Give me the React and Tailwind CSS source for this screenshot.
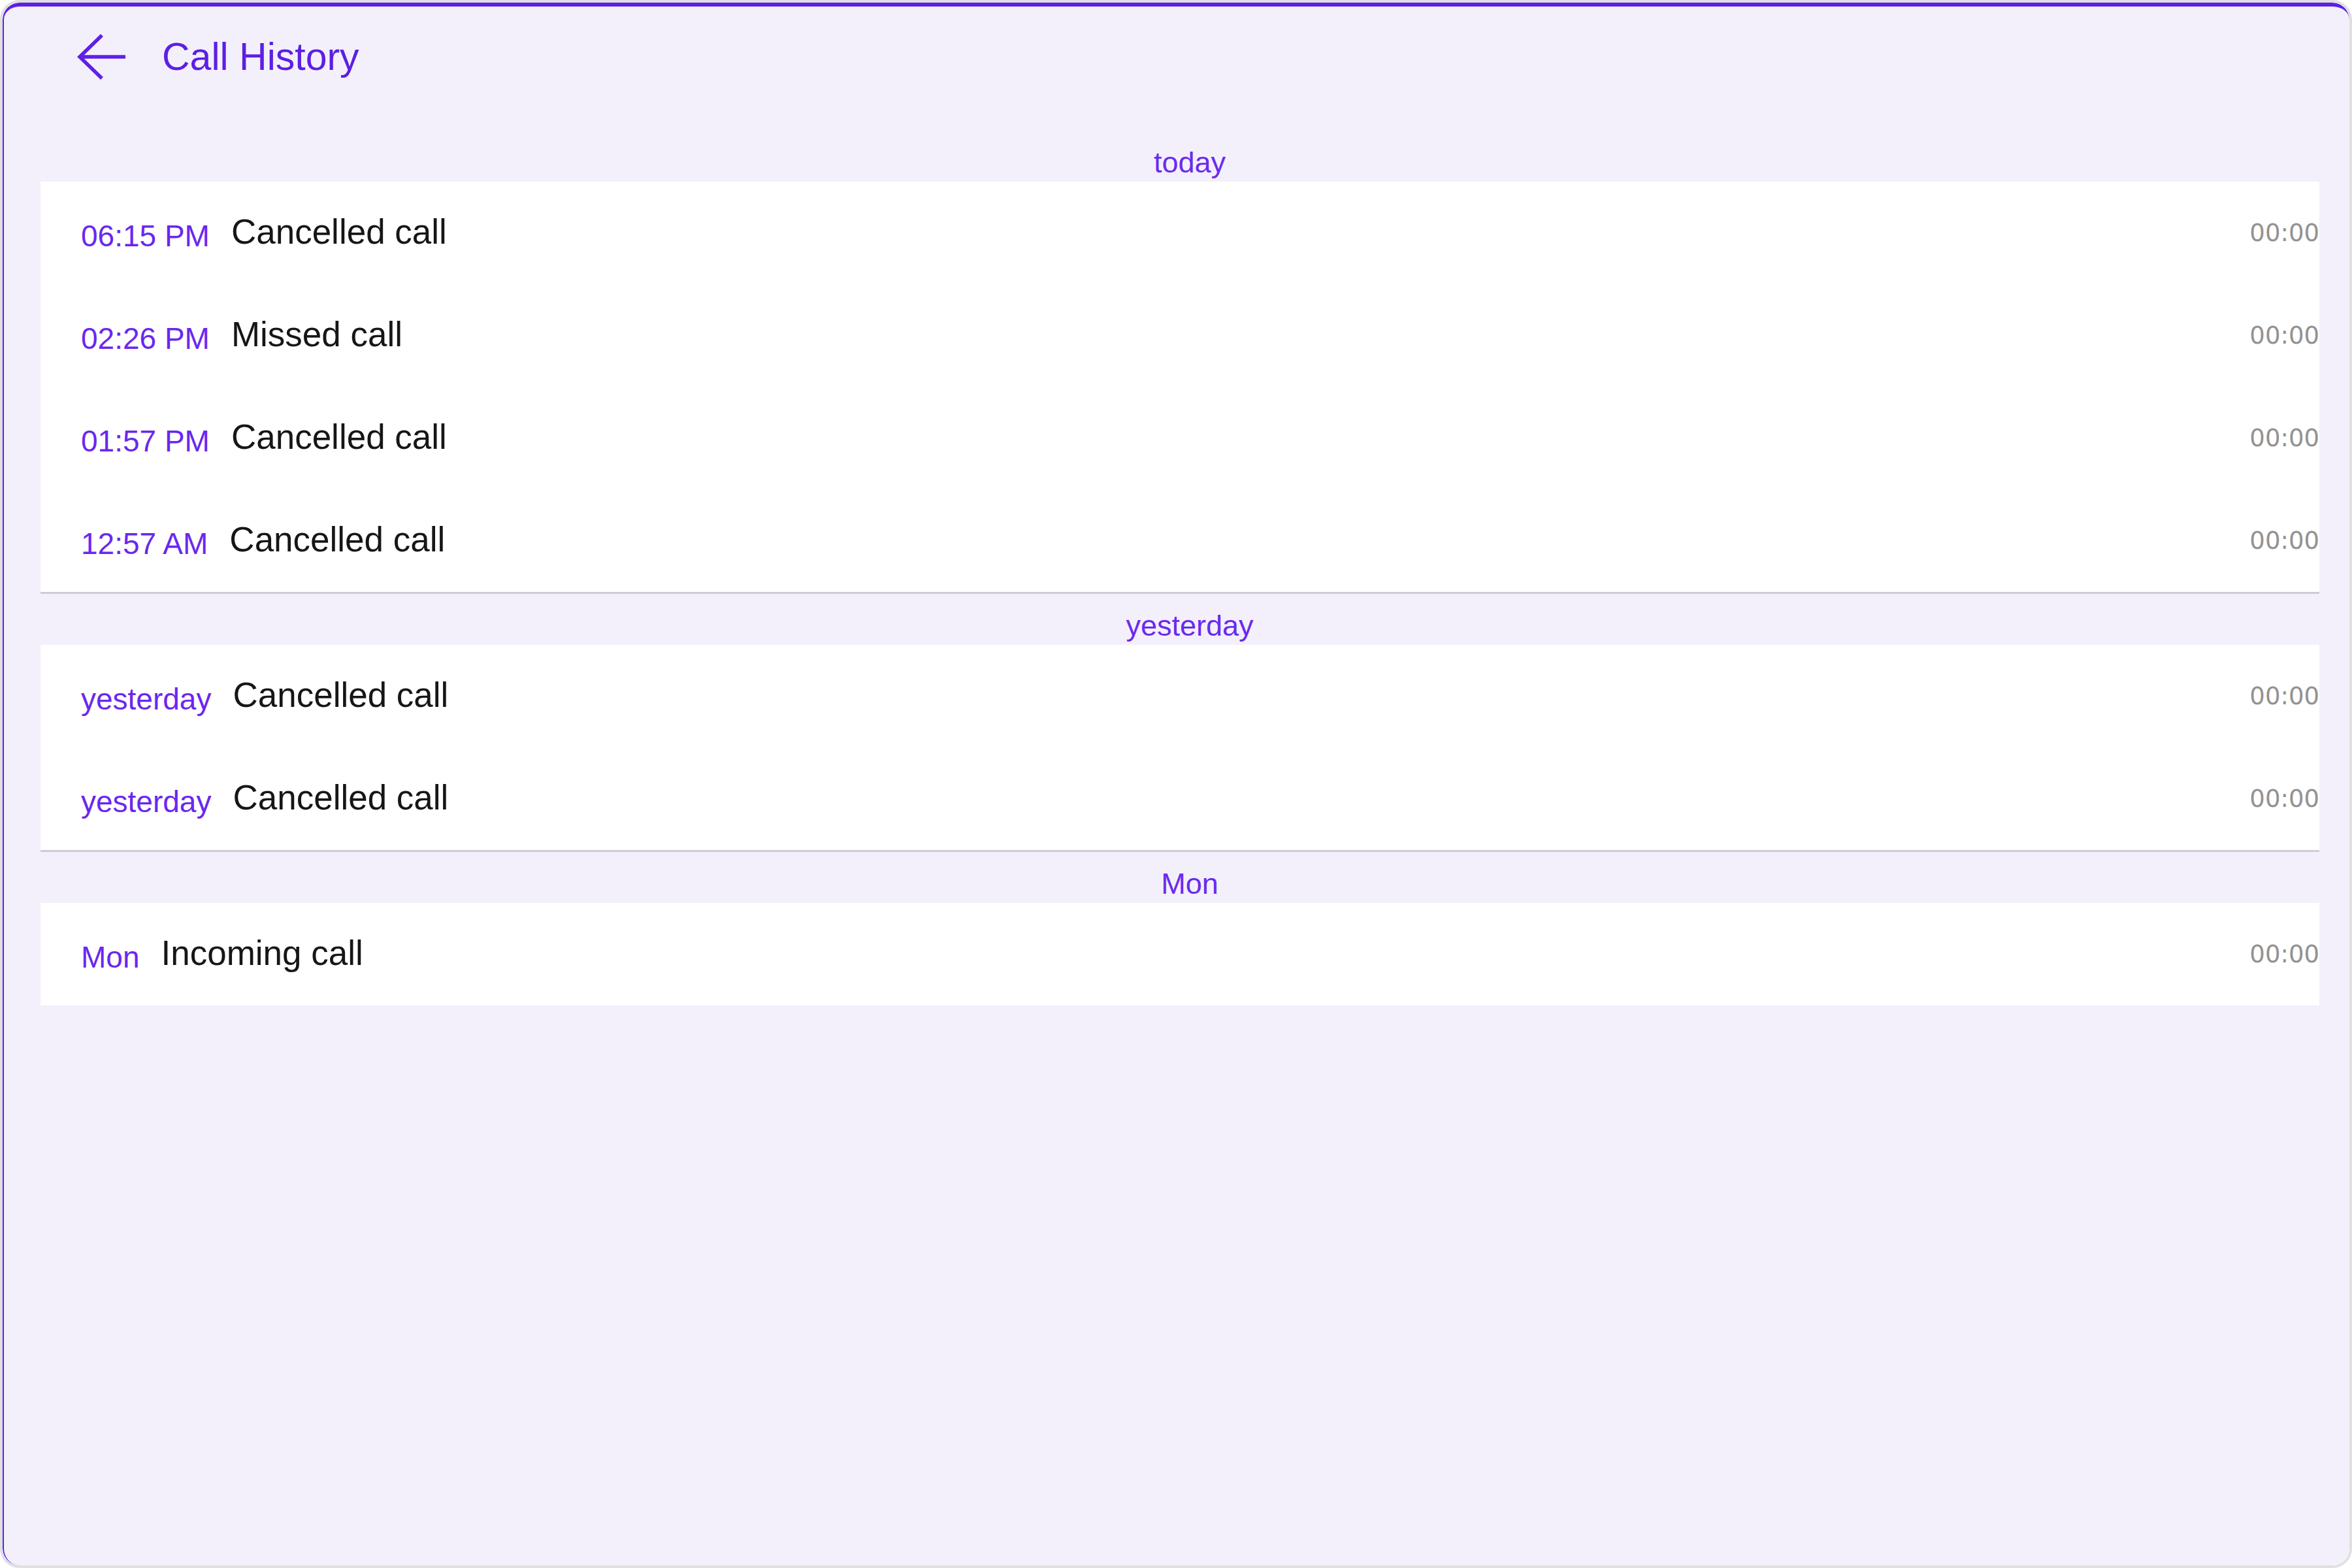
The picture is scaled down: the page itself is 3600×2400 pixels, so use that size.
import React from "react";

const sections = [
  {
    label: "today",
    rows: [
      { time: "06:15 PM", text: "Cancelled call" },
      { time: "02:26 PM", text: "Missed call" },
      { time: "01:57 PM", text: "Cancelled call" },
      { time: "12:57 AM", text: "Cancelled call" },
    ],
    border: true,
  },
  {
    label: "yesterday",
    rows: [
      { time: "yesterday", text: "Cancelled call" },
      { time: "yesterday", text: "Cancelled call" },
    ],
    border: true,
  },
  {
    label: "Mon",
    rows: [{ time: "Mon", text: "Incoming call" }],
    border: false,
  },
];

function BackArrow() {
  return (
    <svg width="76" height="70" viewBox="0 0 76 70" fill="none">
      <path
        d="M38 2 L4 35 L38 68 M4 35 H74"
        stroke="#5f20e6"
        strokeWidth="5.5"
        strokeLinecap="butt"
        strokeLinejoin="miter"
      />
    </svg>
  );
}

export default function App() {
  return (
    <div
      className="w-[3600px] h-[2400px] border-4 border-[#e0e0e0] rounded-[30px] overflow-hidden"
      style={{ fontFamily: '"Liberation Sans", Arial, sans-serif' }}
    >
      <div className="h-full bg-[#f3f0fb] border-t-[6px] border-l-2 border-[#5f1fe6] rounded-[26px] flex flex-col">
        <div className="h-[190px] pb-[36px] pl-[112px] flex items-center shrink-0">
          <BackArrow />
          <div className="ml-[54px] text-[59px] leading-normal text-[#5d1fe3]">Call History</div>
        </div>
        {sections.map((s, i) => (
          <div key={i} className="flex flex-col">
            <div className="h-[78px] ml-[56px] mr-[16px] flex items-end justify-center pb-[7px]">
              <span className="text-[45px] leading-[45px] text-[#6a2aef]">{s.label}</span>
            </div>
            <div
              className={
                "ml-[56px] mr-[46px] bg-white flex flex-col " +
                (s.border ? "border-b-[3px] border-[#cfcbd6]" : "")
              }
            >
              {s.rows.map((r, j) => (
                <div key={j} className="h-[157px] flex items-center pl-[62px]">
                  <span className="text-[46px] leading-normal text-[#6a27ef] pt-[10px]">{r.time}</span>
                  <span className="ml-[33px] text-[53px] leading-normal text-[#161616] pb-[4px]">{r.text}</span>
                  <span
                    className="ml-auto text-[37px] leading-normal text-[#929292]"
                    style={{ fontFamily: '"DejaVu Sans", sans-serif' }}
                  >
                    00:00
                  </span>
                </div>
              ))}
            </div>
          </div>
        ))}
      </div>
    </div>
  );
}
